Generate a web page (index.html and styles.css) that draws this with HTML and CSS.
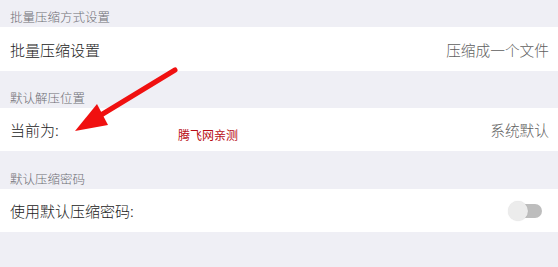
FILE: index.html
```html
<!DOCTYPE html>
<html lang="zh">
<head>
<meta charset="utf-8">
<link rel="stylesheet" href="styles.css">
</head>
<body>
<div class="page">
  <div class="section-head first">批量压缩方式设置</div>
  <div class="row">
    <span class="label">批量压缩设置</span>
    <span class="value">压缩成一个文件</span>
  </div>
  <div class="section-head">默认解压位置</div>
  <div class="row">
    <span class="label">当前为:</span>
    <span class="value">系统默认</span>
  </div>
  <div class="section-head third">默认压缩密码</div>
  <div class="row">
    <span class="label">使用默认压缩密码:</span>
    <span class="switch"><span class="track"></span><span class="knob"></span></span>
  </div>

  <svg class="arrow" width="558" height="267" viewBox="0 0 558 267">
    <line x1="175" y1="70" x2="101" y2="115" stroke="#f01010" stroke-width="5" stroke-linecap="round"/>
    <polygon points="75,131 97,104 108,125" fill="#f01010"/>
  </svg>
  <div class="stamp">腾飞网亲测</div>
</div>
</body>
</html>
```
FILE: styles.css
```css
html, body {
  margin: 0;
  padding: 0;
}
body {
  background: #efeff5;
  font-family: "Noto Sans CJK SC", "Noto Sans", sans-serif;
  width: 558px;
  height: 267px;
  overflow: hidden;
}
.page {
  position: relative;
  width: 558px;
  height: 267px;
  display: flex;
  flex-direction: column;
}
.section-head {
  height: 37px;
  display: flex;
  align-items: flex-end;
  padding-left: 10px;
  font-size: 12.5px;
  font-weight: 300;
  line-height: 20px;
  color: #6e6e74;
  box-sizing: border-box;
}
.section-head.first {
  height: 27px;
}
.section-head.third {
  height: 38px;
}
.row {
  height: 43px;
  background: #fff;
  display: flex;
  align-items: center;
  justify-content: space-between;
  padding: 0 9px 0 10px;
  box-sizing: border-box;
}
.section-head.first + .row {
  height: 44px;
}
.label {
  font-size: 15px;
  font-weight: 300;
  color: #222;
}
.value {
  font-size: 14.7px;
  font-weight: 300;
  color: #5e5e5e;
}
.switch {
  position: relative;
  width: 34px;
  height: 22px;
  margin-right: 7px;
}
.track {
  position: absolute;
  left: 4px;
  top: 4px;
  width: 30px;
  height: 14px;
  border-radius: 7px;
  background: #bdbdbd;
}
.knob {
  position: absolute;
  left: 0;
  top: 1px;
  width: 20px;
  height: 20px;
  border-radius: 50%;
  background: #ececec;
  box-shadow: 0 0 1px rgba(0,0,0,0.15);
}
.arrow {
  position: absolute;
  left: 0;
  top: 0;
}
.stamp {
  position: absolute;
  left: 178px;
  top: 127px;
  font-size: 12px;
  line-height: 16px;
  color: #b80c14;
}
```
